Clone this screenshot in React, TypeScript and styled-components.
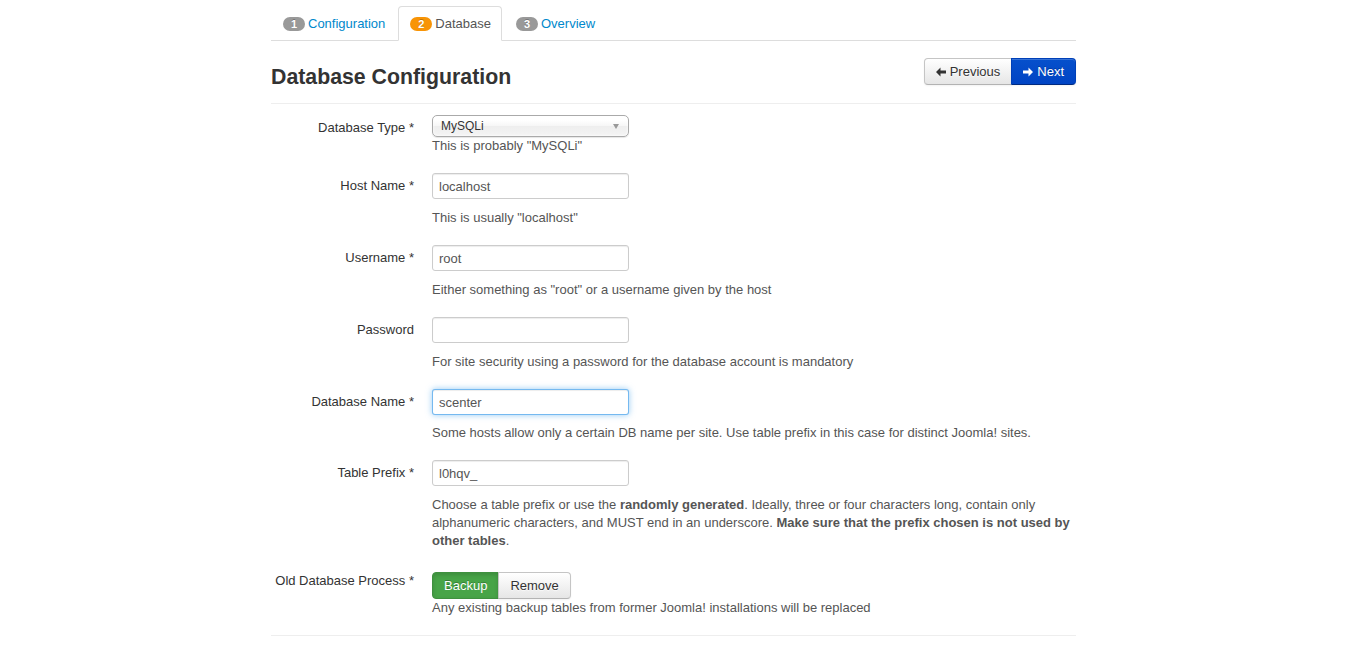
import React from "react";
import styled, { createGlobalStyle, css } from "styled-components";

const Global = createGlobalStyle`
  html, body { margin: 0; padding: 0; background: #fff; }
  body {
    padding-left: 2px;
    font-family: "Liberation Sans", Arial, Helvetica, sans-serif;
    font-size: 13px;
    line-height: 18px;
    color: #333;
  }
  * { box-sizing: border-box; }
`;

const Container = styled.div`
  width: 805px;
  margin: 0 auto;
`;

const Tabs = styled.ul`
  list-style: none;
  margin: 0;
  padding: 6px 0 0;
  display: flex;
  border-bottom: 1px solid #ddd;
`;

const Tab = styled.li<{ $active?: boolean }>`
  margin-right: 2px;
  margin-bottom: -1px;
  display: flex;
  align-items: center;
  gap: 3px;
  padding: 8px 10px 7px 11px;
  line-height: 18px;
  border: 1px solid transparent;
  border-radius: 4px 4px 0 0;
  color: #0088cc;
  ${(p) =>
    p.$active &&
    css`
      color: #555;
      background: #fff;
      border-color: #ddd #ddd transparent;
    `}
`;

const Badge = styled.span<{ $color: string }>`
  display: inline-block;
  min-width: 22px;
  padding: 0 7px;
  height: 14px;
  line-height: 14px;
  font-size: 11px;
  font-weight: bold;
  color: #fff;
  text-align: center;
  background: ${(p) => p.$color};
  border-radius: 8px;
  text-shadow: 0 -1px 0 rgba(0, 0, 0, 0.25);
`;

const Header = styled.div`
  display: flex;
  justify-content: space-between;
  align-items: flex-start;
  padding: 17px 0 13px;
  border-bottom: 1px solid #eee;
`;

const Title = styled.h3`
  margin: 6px 0 0;
  font-size: 21.3px;
  line-height: 26px;
  font-weight: bold;
  color: #333;
`;

const BtnGroup = styled.div`
  display: flex;
`;

const Btn = styled.button<{ $variant?: "primary" | "success" | "default"; $first?: boolean; $last?: boolean }>`
  display: inline-flex;
  align-items: center;
  gap: 4px;
  height: 27px;
  padding: 0 11px;
  font-family: inherit;
  font-size: 13px;
  line-height: 18px;
  cursor: pointer;
  border: 1px solid #c5c5c5;
  border-bottom-color: #b3b3b3;
  color: #333;
  text-shadow: 0 1px 1px rgba(255, 255, 255, 0.75);
  background: linear-gradient(#ffffff, #e6e6e6);
  box-shadow: inset 0 1px 0 rgba(255, 255, 255, 0.2), 0 1px 2px rgba(0, 0, 0, 0.05);
  border-radius: ${(p) =>
    p.$first ? "4px 0 0 4px" : p.$last ? "0 4px 4px 0" : "0"};
  ${(p) => !p.$first && css`margin-left: -1px;`}
  ${(p) =>
    p.$variant === "primary" &&
    css`
      color: #fff;
      text-shadow: 0 -1px 0 rgba(0, 0, 0, 0.25);
      background: linear-gradient(#0650cc, #0044c4);
      border-color: #0040b8 #0040b8 #002a80;
    `}
  ${(p) =>
    p.$variant === "success" &&
    css`
      color: #fff;
      text-shadow: 0 -1px 0 rgba(0, 0, 0, 0.25);
      background: #47a447;
      border-color: #3f903f;
      box-shadow: inset 0 2px 4px rgba(0, 0, 0, 0.15);
    `}
`;

const Form = styled.div`
  padding-top: 11px;
  border-bottom: 1px solid #eee;
`;

const Group = styled.div`
  display: flex;
  margin-bottom: 18px;
`;

const Label = styled.label`
  width: 143px;
  flex-shrink: 0;
  padding-top: 4px;
  text-align: right;
  color: #333;
`;

const Controls = styled.div<{ $padTop?: number }>`
  margin-left: 18px;
  flex: 1;
  padding-top: ${(p) => p.$padTop ?? 0}px;
`;

const Input = styled.input<{ $focus?: boolean }>`
  display: block;
  width: 197px;
  height: 26px;
  padding: 4px 6px;
  font-family: inherit;
  font-size: 13px;
  line-height: 18px;
  color: #555;
  background: #fff;
  border: 1px solid #ccc;
  border-radius: 3px;
  outline: none;
  box-shadow: inset 0 1px 1px rgba(0, 0, 0, 0.075);
  ${(p) =>
    p.$focus &&
    css`
      border-color: rgba(82, 168, 236, 0.8);
      box-shadow: inset 0 1px 1px rgba(0, 0, 0, 0.075), 0 0 6px rgba(82, 168, 236, 0.6);
    `}
`;

const Select = styled.div`
  width: 197px;
  height: 22px;
  display: flex;
  align-items: center;
  justify-content: space-between;
  padding: 0 8px;
  font-size: 12px;
  color: #333;
  border: 1px solid #aaa;
  border-radius: 5px;
  background: linear-gradient(#ffffff 20%, #f6f6f6 50%, #eeeeee 52%, #f4f4f4 100%);
  box-shadow: inset 0 0 3px #fff, 0 1px 1px rgba(0, 0, 0, 0.1);
`;

const Caret = styled.span`
  width: 0;
  height: 0;
  border-left: 3.5px solid transparent;
  border-right: 3.5px solid transparent;
  border-top: 5px solid #999;
  margin-right: 1px;
`;

const Help = styled.div<{ $mt?: number }>`
  margin-top: ${(p) => p.$mt ?? 0}px;
  color: #555;
`;

const Arrow = ({ dir }: { dir: "left" | "right" }) => (
  <svg width="10" height="10" viewBox="0 0 10 10" aria-hidden="true">
    {dir === "left" ? (
      <path d="M0 5 L4.5 0.5 L4.5 3.5 L10 3.5 L10 6.5 L4.5 6.5 L4.5 9.5 Z" fill="currentColor" />
    ) : (
      <path d="M10 5 L5.5 0.5 L5.5 3.5 L0 3.5 L0 6.5 L5.5 6.5 L5.5 9.5 Z" fill="currentColor" />
    )}
  </svg>
);

export default function App() {
  return (
    <>
      <Global />
      <Container>
        <Tabs>
          <Tab>
            <Badge $color="#999">1</Badge>Configuration
          </Tab>
          <Tab $active>
            <Badge $color="#f89406">2</Badge>Database
          </Tab>
          <Tab>
            <Badge $color="#999">3</Badge>Overview
          </Tab>
        </Tabs>

        <Header>
          <Title>Database Configuration</Title>
          <BtnGroup>
            <Btn $first>
              <Arrow dir="left" />
              Previous
            </Btn>
            <Btn $last $variant="primary">
              <Arrow dir="right" />
              Next
            </Btn>
          </BtnGroup>
        </Header>

        <Form>
          <Group>
            <Label>Database Type *</Label>
            <Controls>
              <Select>
                <span>MySQLi</span>
                <Caret />
              </Select>
              <Help>This is probably "MySQLi"</Help>
            </Controls>
          </Group>

          <Group>
            <Label>Host Name *</Label>
            <Controls>
              <Input defaultValue="localhost" />
              <Help $mt={10}>This is usually "localhost"</Help>
            </Controls>
          </Group>

          <Group>
            <Label>Username *</Label>
            <Controls>
              <Input defaultValue="root" />
              <Help $mt={10}>Either something as "root" or a username given by the host</Help>
            </Controls>
          </Group>

          <Group>
            <Label>Password</Label>
            <Controls>
              <Input type="password" defaultValue="" />
              <Help $mt={10}>For site security using a password for the database account is mandatory</Help>
            </Controls>
          </Group>

          <Group>
            <Label>Database Name *</Label>
            <Controls>
              <Input $focus defaultValue="scenter" />
              <Help $mt={9}>
                Some hosts allow only a certain DB name per site. Use table prefix in this case for distinct Joomla! sites.
              </Help>
            </Controls>
          </Group>

          <Group>
            <Label>Table Prefix *</Label>
            <Controls>
              <Input defaultValue="l0hqv_" />
              <Help $mt={10}>
                Choose a table prefix or use the <b>randomly generated</b>. Ideally, three or four characters long,
                contain only alphanumeric characters, and MUST end in an underscore.{" "}
                <b>Make sure that the prefix chosen is not used by other tables</b>.
              </Help>
            </Controls>
          </Group>

          <Group>
            <Label>Old Database Process *</Label>
            <Controls $padTop={4}>
              <BtnGroup>
                <Btn $first $variant="success">Backup</Btn>
                <Btn $last>Remove</Btn>
              </BtnGroup>
              <Help>Any existing backup tables from former Joomla! installations will be replaced</Help>
            </Controls>
          </Group>
        </Form>
      </Container>
    </>
  );
}
